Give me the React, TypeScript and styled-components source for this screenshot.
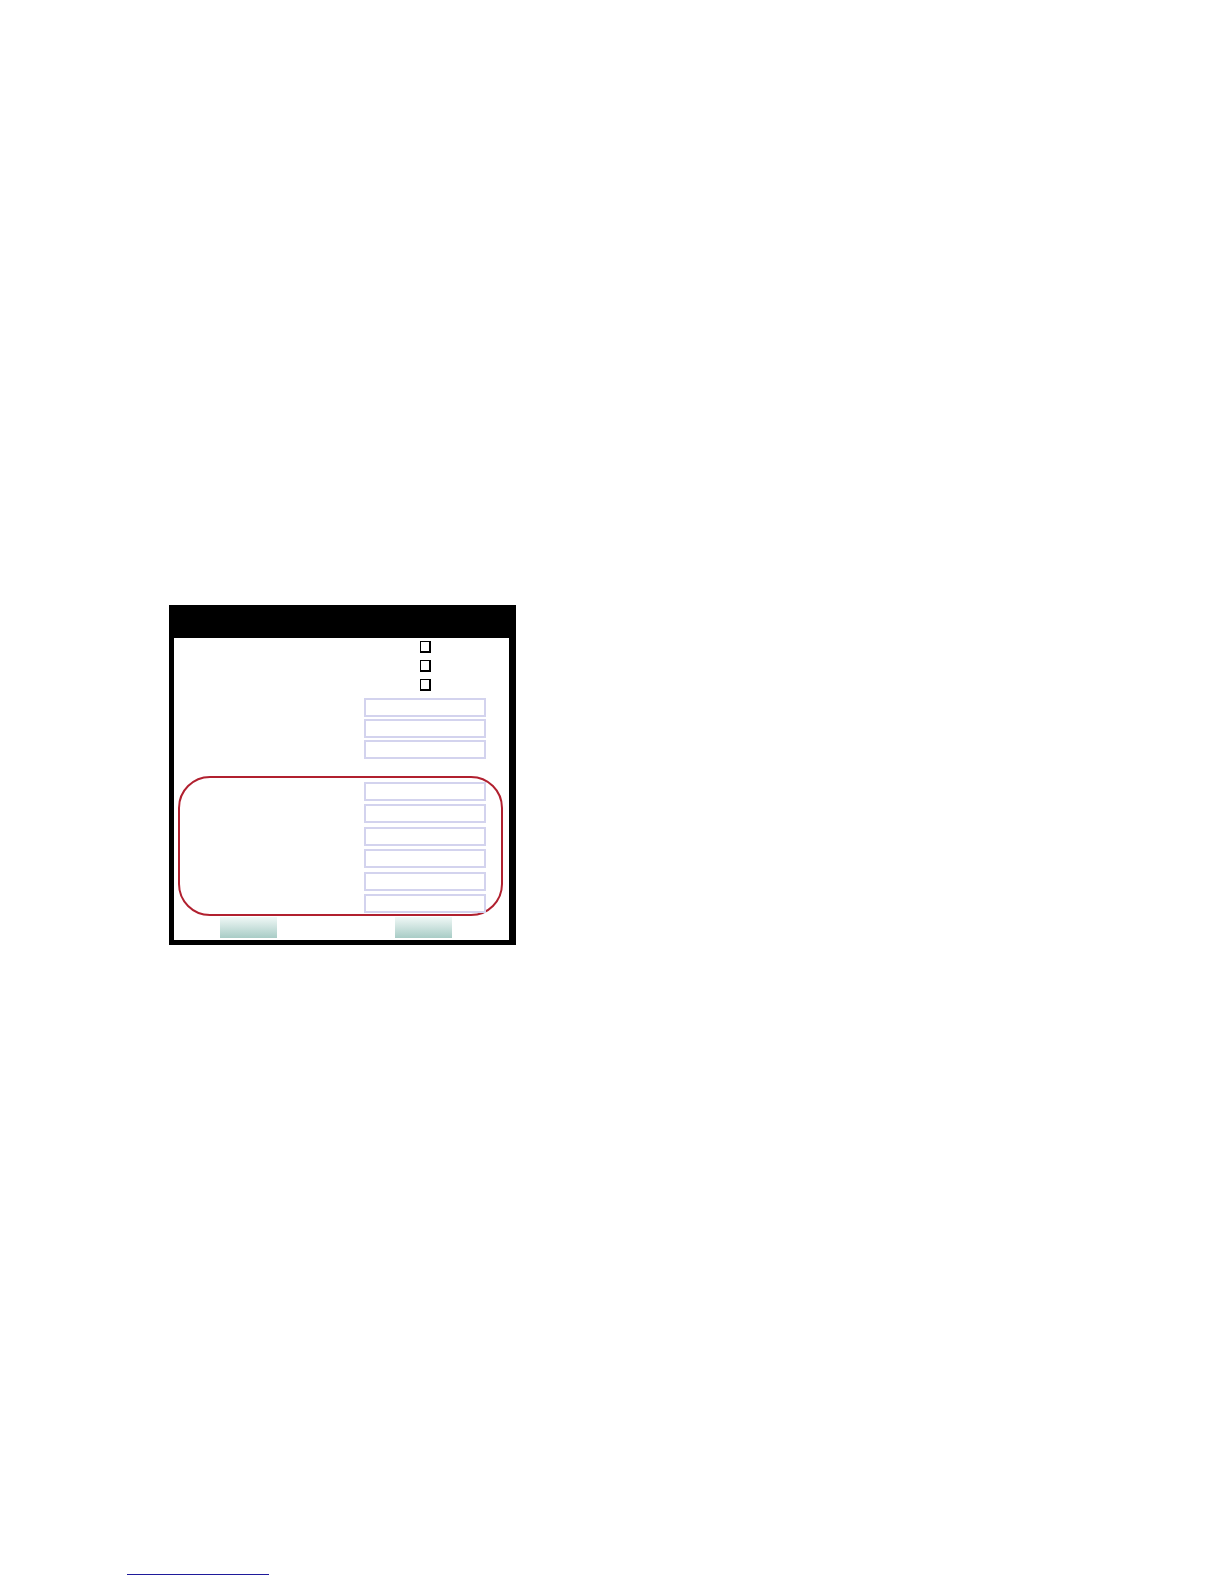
import React, { FC } from 'react'
import styled, { createGlobalStyle } from 'styled-components'

const GlobalStyle = createGlobalStyle`
    html, body {
        margin: 0;
        padding: 0;
        background: #fff;
        font-family: "Liberation Sans", Arial, sans-serif;
    }
`

const Page = styled.div`
    min-height: 1584px;
    box-sizing: border-box;
    padding-top: 605px;
`

const Dialog = styled.div`
    margin-left: 169px;
    width: 347px;
    box-sizing: border-box;
    border: 5px solid #000;
    border-right-width: 7px;
    border-top: 0;
    background: #000;
`

const TitleBar = styled.div`
    height: 33px;
    background: #000;
`

const Body = styled.div`
    display: flex;
    flex-direction: column;
    background: #fff;
    padding: 3px 0 2px;
`

const Row = styled.div<{ $height?: number; $inset: number }>`
    display: flex;
    justify-content: flex-end;
    height: ${p => (p.$height ? `${p.$height}px` : 'auto')};
    padding-right: ${p => p.$inset}px;
`

const Cell = styled.div`
    width: 122px;
    display: flex;
    justify-content: center;
    align-items: flex-start;
`

const Check = styled.input.attrs({ type: 'checkbox' })`
    appearance: none;
    margin: 0;
    width: 11px;
    height: 12px;
    box-sizing: border-box;
    border: 1px solid #000;
    border-right-width: 2px;
    border-bottom-width: 2px;
    background: #fff;
`

const Field = styled.input.attrs({ type: 'text' })`
    appearance: none;
    margin: 0;
    width: 122px;
    height: 19px;
    box-sizing: border-box;
    border: 2px solid #d3d3ee;
    background: #fff;
    outline: none;
`

const FieldStack = styled.div<{ $gap: number }>`
    display: flex;
    flex-direction: column;
    gap: ${p => p.$gap}px;
`

const Group = styled.div`
    margin: 17px 6px 0 4px;
    border: 2px solid #b1202f;
    border-radius: 32px;
    padding: 4px 0 1px;
`

const Buttons = styled.div`
    display: flex;
    gap: 118px;
    margin-top: 1px;
    padding-left: 46px;
`

const Button = styled.button`
    width: 57px;
    height: 21px;
    border: 0;
    padding: 0;
    background: linear-gradient(#f0f8f6, #a8ccc6);
`

const Footer = styled.div`
    margin-top: 629px;
    padding-left: 127px;
`

const Link = styled.a`
    display: block;
    width: 142px;
    height: 0;
    border-bottom: 1px solid #1f1a9b;
`

const App: FC = () => {
    const upper = [0, 1, 2]
    const lower = [0, 1, 2, 3, 4, 5]

    return (
        <>
            <GlobalStyle />
            <Page>
                <Dialog>
                    <TitleBar />
                    <Body>
                        {upper.map(i => (
                            <Row key={`c${i}`} $height={19} $inset={23}>
                                <Cell><Check /></Cell>
                            </Row>
                        ))}
                        <FieldStack $gap={2}>
                            {upper.map(i => (
                                <Row key={`f${i}`} $inset={23}>
                                    <Field />
                                </Row>
                            ))}
                        </FieldStack>
                        <Group>
                            <FieldStack $gap={3.4}>
                                {lower.map(i => (
                                    <Row key={`g${i}`} $inset={15}>
                                        <Field />
                                    </Row>
                                ))}
                            </FieldStack>
                        </Group>
                        <Buttons>
                            <Button />
                            <Button />
                        </Buttons>
                    </Body>
                </Dialog>
                <Footer>
                    <Link href="#" />
                </Footer>
            </Page>
        </>
    )
}

export default App
